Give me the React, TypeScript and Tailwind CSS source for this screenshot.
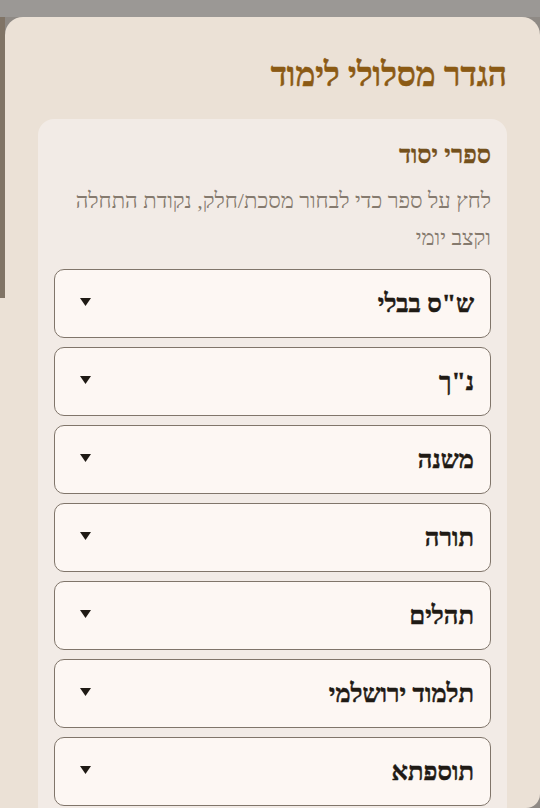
import React from 'react';

const books = ['ש"ס בבלי', 'נ"ך', 'משנה', 'תורה', 'תהלים', 'תלמוד ירושלמי', 'תוספתא'];

function BookSelect({ name }: { name: string }) {
    return (
        <div className="h-[69px] shrink-0 flex items-center justify-between pr-[16px] pl-[25px] rounded-[10px] border border-[#80756a] bg-[#fdf7f3]">
            <span className="text-[25.5px] leading-[32px] font-bold text-[#1f1a14] [-webkit-text-stroke:0.5px_#1f1a14]">{name}</span>
            <svg width="11" height="8" viewBox="0 0 11 8" className="text-[#1f1a14] -mt-[4px]">
                <path d="M0 0 L11 0 L5.5 8 Z" fill="currentColor" />
            </svg>
        </div>
    );
}

export default function App() {
    return (
        <div className="h-[808px] overflow-hidden bg-[#9b9895] flex" style={{ fontFamily: '"Liberation Serif", serif' }}>
            {/* scroll thumb strip */}
            <div className="w-[5px] shrink-0 flex flex-col">
                <div className="h-[17px] bg-[#9b9895]"></div>
                <div className="h-[281px] bg-[#807466]"></div>
                <div className="flex-1 bg-[#ebe1d6]"></div>
            </div>

            <div className="flex-1 flex flex-col pt-[17px] [background:linear-gradient(#9b9895_0_17px,#8f8a85_17px)]">
                <div dir="rtl" className="h-[791px] overflow-hidden rounded-tl-[18px] rounded-tr-[18px] rounded-br-[14px] bg-[#ebe1d6] pt-[38px] px-[33px]">
                    <h1 className="text-[33.5px] leading-[40px] font-bold text-[#8b5a14] [-webkit-text-stroke:0.5px_#8b5a14]">הגדר מסלולי לימוד</h1>

                    <div className="mt-[24px] rounded-[16px] bg-[#f2ebe6] px-[16px] pt-[21px] pb-[16px]">
                        <h2 className="text-[25px] leading-[30px] font-bold text-[#74501c] [-webkit-text-stroke:0.3px_#74501c]">ספרי יסוד</h2>
                        <p className="mt-[12px] text-[22px] leading-[37px] text-[#857a6e]">
                            לחץ על ספר כדי לבחור מסכת/חלק, נקודת התחלה וקצב יומי
                        </p>
                        <div className="mt-[13px] flex flex-col gap-[9px]">
                            {books.map(b => (
                                <BookSelect key={b} name={b} />
                            ))}
                        </div>
                    </div>
                </div>
            </div>
        </div>
    );
}
